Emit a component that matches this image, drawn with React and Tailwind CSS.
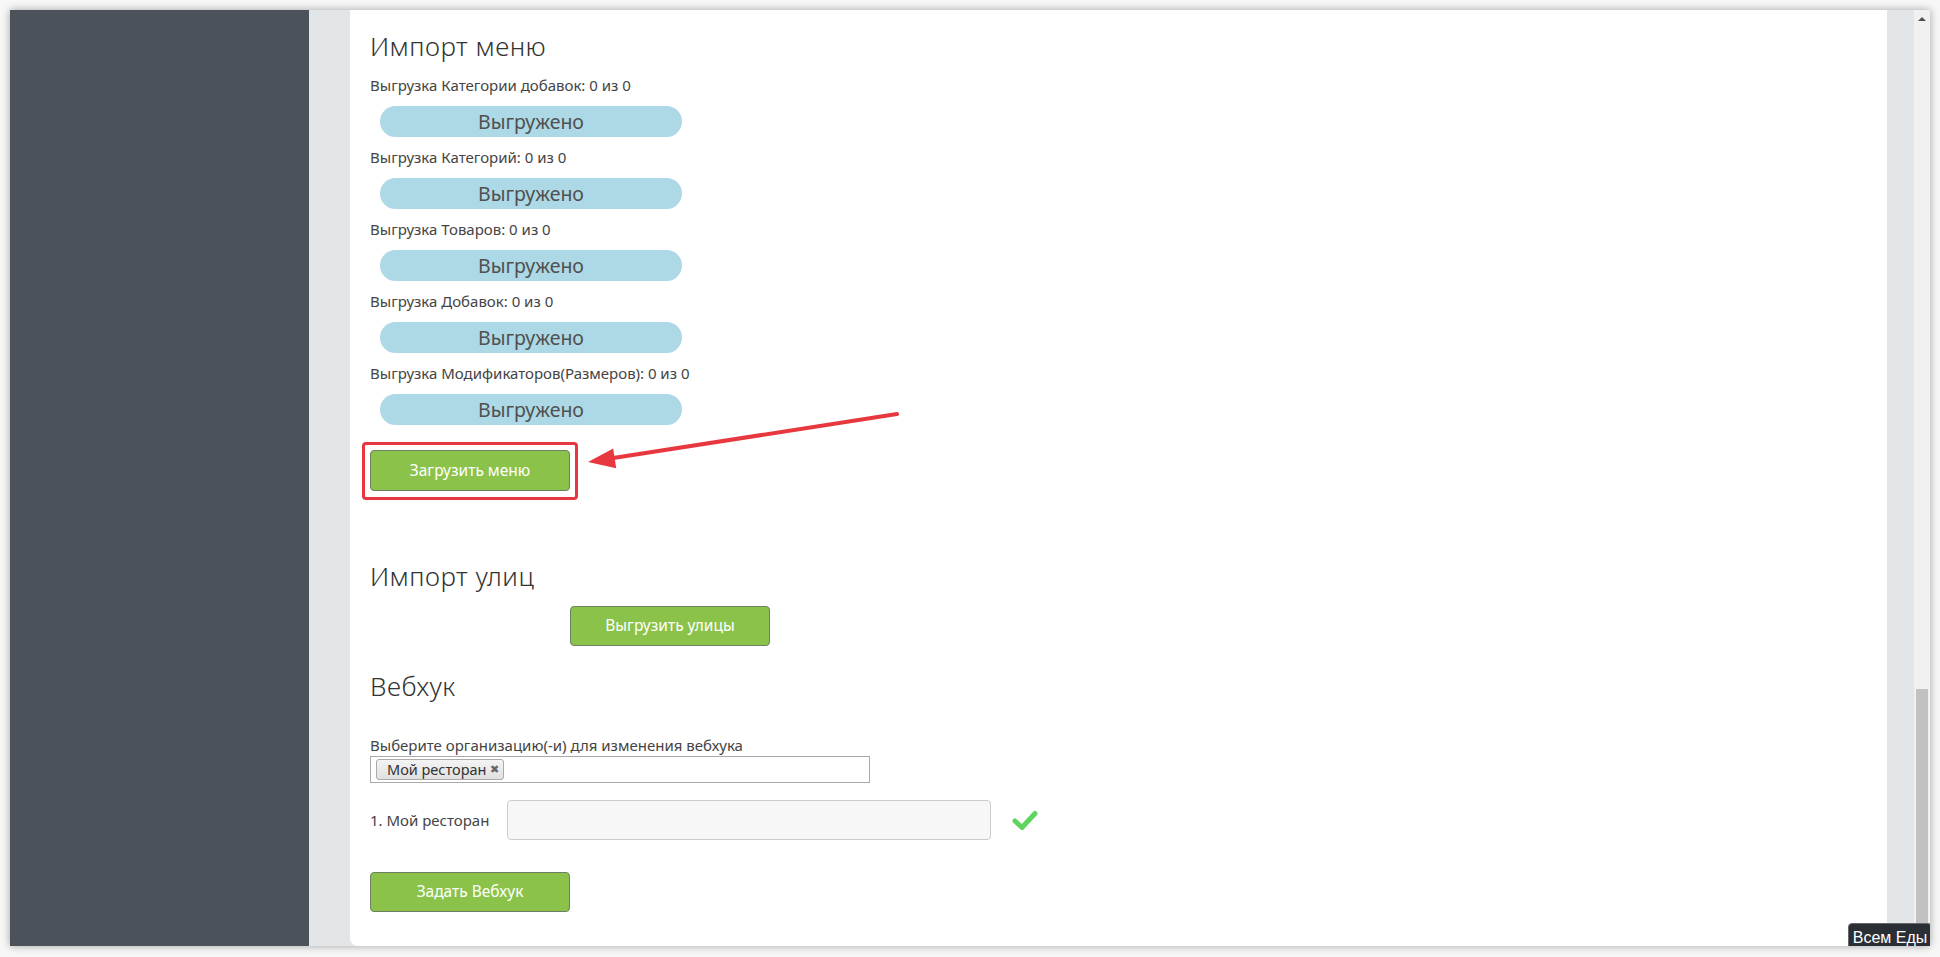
import React from "react";

const font = { fontFamily: '"Noto Sans", "Open Sans", sans-serif' };

function Pill() {
  return (
    <div className="ml-[10px] mt-[12px] mb-[11px] flex h-[31px] w-[302px] items-center justify-center rounded-full bg-[#add8e6] text-[19.5px] text-[#505050]">
      Выгружено
    </div>
  );
}

function Row({ label }) {
  return (
    <div>
      <div className="h-[18px] text-[15px] leading-[18px] text-[#444]">{label}</div>
      <Pill />
    </div>
  );
}

function GreenButton({ children, className = "" }) {
  return (
    <button
      className={
        "flex h-[41px] w-[200px] items-center justify-center rounded-[4px] border border-[#6f7f63] bg-[#8bc34a] text-[15.5px] text-white " +
        className
      }
    >
      {children}
    </button>
  );
}

export default function App() {
  return (
    <div className="h-[957px] w-[1940px] bg-[#f7f7f7] pl-[10px] pt-[10px]" style={font}>
      <div className="relative flex h-[936px] w-[1920px] overflow-hidden shadow-[0_0_8px_rgba(0,0,0,0.35)]">
        <aside className="w-[299px] shrink-0 bg-[#4b525a]" />
        <main className="flex flex-1 bg-[#e2e6e9] pl-[41px] pr-[27px]">
          <div className="flex-1 rounded-b-[8px] bg-white pl-[20px] pt-[21px]">
            <h2 className="h-[30px] text-[26px] font-light leading-[30px] tracking-[0.5px] text-[#333]">Импорт меню</h2>
            <div className="mt-[15px]">
              <Row label="Выгрузка Категории добавок: 0 из 0" />
              <Row label="Выгрузка Категорий: 0 из 0" />
              <Row label="Выгрузка Товаров: 0 из 0" />
              <Row label="Выгрузка Добавок: 0 из 0" />
              <Row label="Выгрузка Модификаторов(Размеров): 0 из 0" />
            </div>
            <div className="relative mt-[25px] w-[200px]">
              <div className="pointer-events-none absolute -bottom-[9px] -left-[8px] -right-[8px] -top-[8px] rounded-[4px] border-[3px] border-[#e8383f]" />
              <GreenButton>Загрузить меню</GreenButton>
            </div>

            <h2 className="mt-[70px] h-[30px] text-[26px] font-light leading-[30px] tracking-[0.5px] text-[#333]">Импорт улиц</h2>
            <GreenButton className="ml-[200px] mt-[15px] !h-[40px]">Выгрузить улицы</GreenButton>

            <h2 className="mt-[25px] h-[30px] text-[26px] font-light leading-[30px] tracking-[0.5px] text-[#333]">Вебхук</h2>
            <div className="mt-[35px] h-[18px] text-[15px] leading-[18px] text-[#444]">
              Выберите организацию(-и) для изменения вебхука
            </div>
            <div className="mt-[2px] flex h-[27px] w-[500px] items-center border border-[#aaa] pl-[5px]">
              <span className="flex h-[21px] items-center gap-[4px] rounded-[3px] border border-[#aaa] bg-gradient-to-b from-[#f4f4f4] to-[#e0e0e0] pl-[10px] pr-[4px] text-[14.5px] text-[#333]">
                Мой ресторан <span className="text-[11px] text-[#666]">✖</span>
              </span>
            </div>
            <div className="mt-[17px] flex items-center">
              <div className="w-[137px] text-[15px] text-[#444]">1. Мой ресторан</div>
              <div className="h-[40px] w-[484px] rounded-[4px] border border-[#ccc] bg-[#f7f7f7]" />
              <svg className="ml-[21px]" width="26" height="22" viewBox="0 0 26 22">
                <path d="M3 12 L10 18.5 L23 4.5" fill="none" stroke="#5fd45f" strokeWidth="5" strokeLinecap="round" strokeLinejoin="round" />
              </svg>
            </div>
            <GreenButton className="mt-[32px] !h-[40px]">Задать Вебхук</GreenButton>
          </div>
        </main>
        <div className="flex w-[16px] shrink-0 flex-col bg-[#f1f1f1]">
          <div className="flex h-[17px] items-center justify-center">
            <div className="h-0 w-0 border-x-[4px] border-b-[4px] border-x-transparent border-b-[#505050]" />
          </div>
          <div className="flex-1" />
          <div className="mx-[2px] h-[257px] bg-[#c1c1c1]" />
        </div>

        <svg className="pointer-events-none absolute left-0 top-0" width="1920" height="936">
          <line x1="887" y1="404" x2="600" y2="448.5" stroke="#e8383f" strokeWidth="4" strokeLinecap="round" />
          <polygon points="578,452 603.2,438.4 606.2,458.2" fill="#e8383f" />
        </svg>

        <div
          className="absolute left-[1838px] top-[913px] flex h-[29px] w-[84px] items-center justify-center rounded-[4px] border border-[#666] bg-[#2a2e35] text-[16px] text-white"
          style={{ fontFamily: '"Liberation Sans", Arial, sans-serif' }}
        >
          Всем Еды
        </div>
      </div>
    </div>
  );
}
